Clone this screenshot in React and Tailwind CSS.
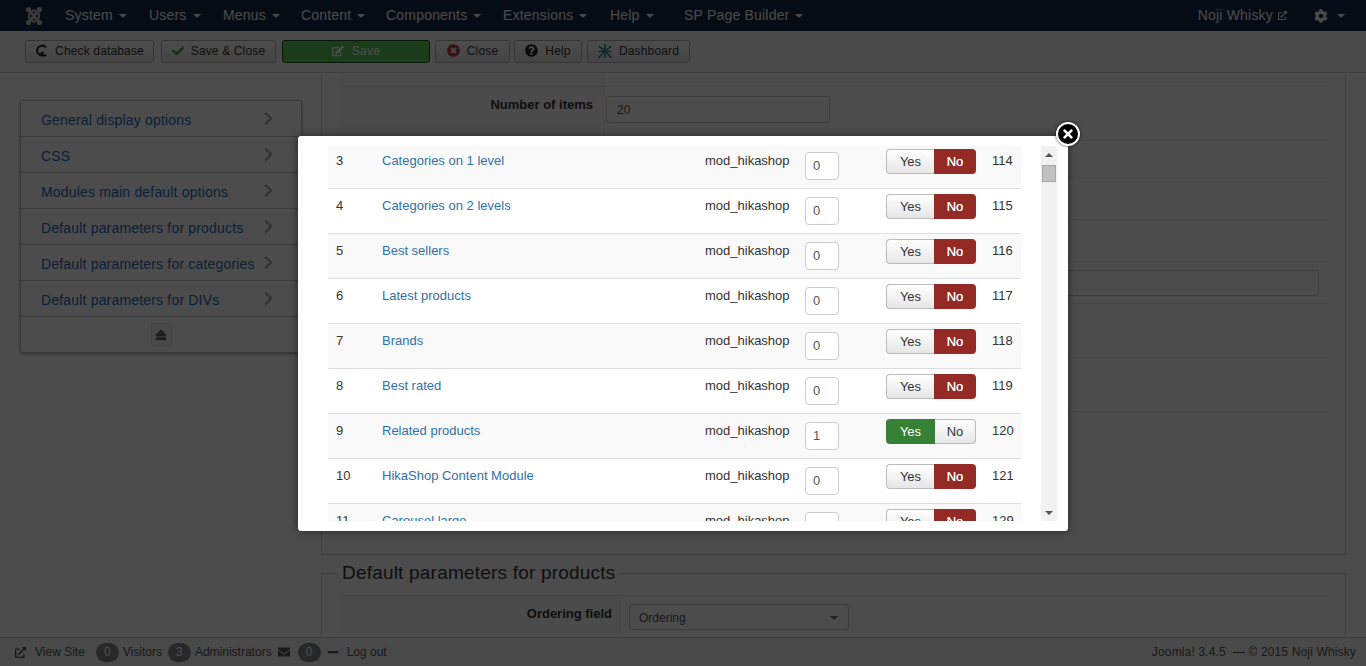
import { FaCheck, FaCog, FaEdit, FaEject, FaChevronRight, FaEnvelope, FaExternalLinkAlt, FaMinus, FaQuestionCircle, FaTimes, FaTimesCircle } from "react-icons/fa";

const menu = [
  { label: "System", w: 84 },
  { label: "Users", w: 74 },
  { label: "Menus", w: 78 },
  { label: "Content", w: 85 },
  { label: "Components", w: 117 },
  { label: "Extensions", w: 107 },
  { label: "Help", w: 74 },
  { label: "SP Page Builder", w: 140 },
];

const sideItems = [
  "General display options",
  "CSS",
  "Modules main default options",
  "Default parameters for products",
  "Default parameters for categories",
  "Default parameters for DIVs",
];

const modules = [
  { n: 3, name: "Categories on 1 level", order: 0, id: 114 },
  { n: 4, name: "Categories on 2 levels", order: 0, id: 115 },
  { n: 5, name: "Best sellers", order: 0, id: 116 },
  { n: 6, name: "Latest products", order: 0, id: 117 },
  { n: 7, name: "Brands", order: 0, id: 118 },
  { n: 8, name: "Best rated", order: 0, id: 119 },
  { n: 9, name: "Related products", order: 1, id: 120, on: true },
  { n: 10, name: "HikaShop Content Module", order: 0, id: 121 },
  { n: 11, name: "Carousel large", order: 0, id: 129 },
];

const formRows = [14, 54, 37, 42, 42, 42, 54, 54, 53];

function JoomlaLogo() {
  return (
    <svg width="18" height="20" viewBox="0 0 18 20" fill="none">
      <path d="M4 4 L14 16 M14 4 L4 16" stroke="#c4c4c4" strokeWidth="3" />
      <path d="M4 8 L9 4 L14 8 L14 12 L9 16 L4 12 Z" stroke="#c4c4c4" strokeWidth="2" />
      <circle cx="3.5" cy="3.5" r="2.6" fill="#c4c4c4" />
      <circle cx="14.5" cy="3.5" r="2.6" fill="#c4c4c4" />
      <circle cx="3.5" cy="16.5" r="2.6" fill="#c4c4c4" />
      <circle cx="14.5" cy="16.5" r="2.6" fill="#c4c4c4" />
    </svg>
  );
}

function Caret({ className = "ml-[6px] border-t-[#f5f5f5]" }) {
  return <span className={`inline-block h-0 w-0 border-x-[4px] border-t-[4px] border-x-transparent ${className}`} />;
}

function ToolButton({ width, gap, icon, label, green }) {
  return (
    <button
      style={{ width, marginRight: gap }}
      className={
        green
          ? "flex h-[23px] items-center justify-center gap-[8px] rounded-[3px] border border-[#1d4f1d] bg-[#5cc85c] pb-[1px] text-[12px] tracking-[0.3px] text-white"
          : "flex h-[23px] items-center justify-center gap-[7px] rounded-[3px] border border-[#b3b3b3] bg-gradient-to-b from-white to-[#e6e6e6] pb-[1px] text-[12px] tracking-[0.15px] text-[#333]"
      }
    >
      {icon}
      {label}
    </button>
  );
}

function CheckIcon() {
  return (
    <svg width="13" height="13" viewBox="0 0 13 13" fill="none">
      <path d="M11 3.5 A5 5 0 1 0 6 11.5 L11.5 11.5" stroke="#222" strokeWidth="2" />
      <path d="M8.5 7 L4.5 9.5 L8.5 12 Z" fill="#222" />
    </svg>
  );
}

function DashIcon() {
  return (
    <svg width="14" height="16" viewBox="0 0 14 16" fill="none" stroke="#2c8c96" strokeWidth="1.7">
      <path d="M7 1 L7 15 M1 3.5 L7 8 L13 3.5 M0.5 15 L7 8 L13.5 15 M0.5 8.5 L13.5 8.5" />
    </svg>
  );
}

function Toggle({ on }) {
  return (
    <div className="flex h-[25px] w-[90px] text-[13px]">
      <span
        className={
          on
            ? "flex w-[49px] items-center justify-center rounded-l-[4px] bg-[#378137] text-white"
            : "flex w-[48px] items-center justify-center rounded-l-[4px] border border-r-0 border-[#bbb] bg-gradient-to-b from-white to-[#e6e6e6] text-[#333]"
        }
      >
        Yes
      </span>
      <span
        className={
          on
            ? "flex flex-1 items-center justify-center rounded-r-[4px] border border-l-0 border-[#bbb] bg-gradient-to-b from-white to-[#e6e6e6] text-[#333]"
            : "flex flex-1 items-center justify-center rounded-r-[4px] bg-[#942a25] text-white [text-shadow:0_0_0.5px_white]"
        }
      >
        No
      </span>
    </div>
  );
}

function ModuleRow({ row, index }) {
  return (
    <div className={`flex h-[45px] border-t border-[#ddd] text-[13px] leading-[17px] text-[#333] ${index % 2 === 0 ? "bg-[#f9f9f9]" : "bg-white"}`}>
      <span className="w-[54px] pl-[8px] pt-[8px]">{row.n}</span>
      <a className="w-[323px] pt-[8px] text-[#3071a9]">{row.name}</a>
      <span className="w-[100px] pt-[8px]">mod_hikashop</span>
      <div className="w-[81px] pt-[8px]">
        <div className="flex h-[28px] w-[34px] items-center rounded-[4px] border border-[#ccc] bg-white pb-[2px] pl-[7px] text-[13px] text-[#555]">{row.order}</div>
      </div>
      <div className="w-[106px] pt-[5px]">
        <Toggle on={row.on} />
      </div>
      <span className="pt-[8px]">{row.id}</span>
    </div>
  );
}

export default function App() {
  return (
    <div className="relative flex h-[666px] flex-col overflow-hidden bg-white font-['Liberation_Sans',Arial,sans-serif] text-[13px] text-[#333]">
      {/* NAVBAR */}
      <header className="flex h-[31px] shrink-0 items-center bg-[#13294a] text-[14px] tracking-[0.2px] text-[#f5f5f5]">
        <div className="ml-[25px] mr-[22px] flex w-[18px]">
          <JoomlaLogo />
        </div>
        {menu.map((item) => (
          <div key={item.label} style={{ width: item.w }} className="flex items-center">
            {item.label}
            <Caret />
          </div>
        ))}
        <div className="ml-auto flex items-center">
          Noji Whisky
          <FaExternalLinkAlt className="ml-[5px] text-[9px]" />
        </div>
        <div className="ml-[27px] mr-[21px] flex items-center">
          <FaCog className="text-[14px]" />
          <Caret className="ml-[9px] border-t-[#f5f5f5]" />
        </div>
      </header>

      {/* TOOLBAR */}
      <div className="flex h-[42px] shrink-0 items-center border-b border-[#d8d8d8] bg-[#f8f8f8] pl-[25px] pb-[1px]">
        <ToolButton width={129} gap={7} icon={<CheckIcon />} label="Check database" />
        <ToolButton width={115} gap={6} icon={<FaCheck className="text-[12px] text-[#46a546]" />} label="Save & Close" />
        <ToolButton width={148} gap={5} green icon={<FaEdit className="text-[12px]" />} label="Save" />
        <ToolButton width={75} gap={4} icon={<FaTimesCircle className="text-[13px] text-[#bd362f]" />} label="Close" />
        <ToolButton width={68} gap={5} icon={<FaQuestionCircle className="text-[13px] text-[#222]" />} label="Help" />
        <ToolButton width={103} icon={<DashIcon />} label="Dashboard" />
      </div>

      {/* MAIN */}
      <div className="flex min-h-0 flex-1 overflow-hidden pl-[20px]">
        <aside className="mt-[27px] h-[253px] w-[282px] shrink-0 rounded-[3px] border border-[#bbb] shadow-[0_1px_3px_rgba(0,0,0,0.4)]">
          {sideItems.map((item) => (
            <div key={item} className="flex h-[36px] items-center justify-between border-b border-[#ccc] pl-[20px] pr-[25px] pt-[3px] text-[14px] tracking-[0.18px] text-[#2a69b8]">
              {item}
              <FaChevronRight className="-mt-[4px] text-[15px] text-[#aaa]" />
            </div>
          ))}
          <div className="flex h-[35px] items-center justify-center">
            <div className="flex h-[23px] w-[21px] items-center justify-center rounded-[2px] border border-[#e5e5e5] bg-[#f5f5f5]">
              <FaEject className="text-[12px] text-[#666]" />
            </div>
          </div>
        </aside>

        <div className="ml-[19px] flex w-[1025px] shrink-0 flex-col">
          <div className="h-[482px] shrink-0 border-x border-b border-[#ccc] px-[16px]">
            {formRows.map((h, i) => (
              <div key={i} style={{ height: h }} className="flex border-b border-[#eee] last:border-b-0">
                <div className="flex w-[266px] justify-end bg-[#fafafa] pr-[11px] pt-[8px] font-bold">
                  {i === 1 ? "Number of items" : ""}
                </div>
                <div className="flex-1 border-l border-[#eee] pl-[1px]">
                  {i === 1 && (
                    <div className="mt-[9px] flex h-[27px] w-[224px] items-center rounded-[3px] border border-[#ccc] pl-[10px] text-[12px] text-[#555]">20</div>
                  )}
                  {i === 5 && <div className="ml-[32px] mt-[8px] h-[26px] w-[681px] rounded-[3px] border border-[#ccc]" />}
                </div>
              </div>
            ))}
          </div>

          <fieldset className="mt-[6px] min-h-[200px] border border-[#ccc] px-[16px]">
            <legend className="px-[4px] text-[19px] leading-[24px] tracking-[0.2px] text-[#333]">Default parameters for products</legend>
            <div className="mt-[10px] flex border-t border-[#eee]">
              <div className="flex h-[60px] w-[282px] justify-end bg-[#fafafa] pr-[8px] pt-[8px] font-bold">Ordering field</div>
              <div className="flex-1 border-l border-[#eee] pl-[8px] pt-[8px]">
                <div className="flex h-[26px] w-[220px] items-center justify-between rounded-[4px] border border-[#ccc] pl-[9px] pr-[10px] pt-[1px] text-[12px] text-[#555]">
                  Ordering
                  <Caret className="border-t-[#777]" />
                </div>
              </div>
            </div>
          </fieldset>
        </div>
      </div>

      {/* FOOTER */}
      <footer className="flex h-[29px] shrink-0 items-center justify-between border-t border-[#ccc] bg-[#f5f5f5] pl-[15px] pr-[10px] text-[12px] text-[#555]">
        <div className="flex items-center">
          <FaExternalLinkAlt className="mr-[9px] text-[11px]" />
          View Site
          <span className="ml-[11px] mr-[4px] flex h-[19px] w-[23px] items-center justify-center rounded-full bg-[#888] text-white">0</span>
          Visitors
          <span className="ml-[6px] mr-[4px] flex h-[19px] w-[23px] items-center justify-center rounded-full bg-[#888] text-white">3</span>
          Administrators
          <FaEnvelope className="ml-[6px] text-[12px]" />
          <span className="ml-[8px] mr-[6px] flex h-[19px] w-[23px] items-center justify-center rounded-full bg-[#888] text-white">0</span>
          <FaMinus className="text-[12px]" />
          <span className="ml-[8px]">Log out</span>
        </div>
        <span className="tracking-[0.15px]">Joomla! 3.4.5 &nbsp;— © 2015 Noji Whisky</span>
      </footer>

      {/* OVERLAY + MODAL */}
      <div className="absolute inset-0 bg-black/70" />
      <div className="absolute left-[298px] top-[136px] flex h-[395px] w-[770px] rounded-[3px] bg-white pb-[10px] pl-[30px] pt-[10px] shadow-[0_0_8px_rgba(0,0,0,0.5)]">
        <div className="h-[375px] w-[693px] overflow-hidden">
          <div className="-mt-[3px]">
            {modules.map((row, i) => (
              <ModuleRow key={row.n} row={row} index={i} />
            ))}
          </div>
        </div>
        <div className="ml-[20px] flex h-[375px] w-[16px] flex-col items-center bg-[#f1f1f1]">
          <span className="mt-[7px] h-0 w-0 border-x-[4px] border-b-[4px] border-x-transparent border-b-[#555]" />
          <span className="mt-[8px] h-[17px] w-[14px] border border-[#a8a8a8] bg-[#c1c1c1]" />
          <span className="mt-auto mb-[6px] h-0 w-0 border-x-[4px] border-t-[4px] border-x-transparent border-t-[#555]" />
        </div>
        <button className="absolute -right-[12px] -top-[14px] flex h-[24px] w-[24px] items-center justify-center rounded-full border-2 border-white bg-black text-white shadow-[0_0_3px_rgba(0,0,0,0.8)]">
          <FaTimes className="text-[14px]" />
        </button>
      </div>
    </div>
  );
}
